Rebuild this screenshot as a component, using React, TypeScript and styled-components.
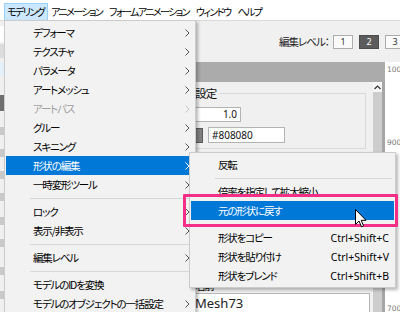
import React from "react";
import styled, { createGlobalStyle, css } from "styled-components";

const GlobalStyle = createGlobalStyle`
  html, body { margin: 0; padding: 0; background: #f0f0f0; }
  body {
    font-family: "Noto Sans CJK JP", "Noto Sans", sans-serif;
    font-feature-settings: "palt" 1;
    color: #000;
  }
  * { box-sizing: border-box; }
`;

// kana in the reference are narrow (Yu Gothic UI) – tighten Noto a bit
const jp = css`
  font-family: "Noto Sans CJK JP", sans-serif;
  font-feature-settings: "palt" 1;
  font-size: 10.5px;
  letter-spacing: -1.15px;
`;

const Screen = styled.div`
  position: relative;
  width: 400px;
  height: 312px;
  overflow: hidden;
  background: #f0f0f0;
  display: flex;
  flex-direction: column;
`;

/* ---------- menu bar ---------- */

const MenuBar = styled.div`
  height: 21px;
  flex: none;
  background: #fff;
  border-bottom: 1px solid #dadada;
  display: flex;
  align-items: flex-end;
  padding-left: 4px;
  ${jp}
  font-size: 10px;
  letter-spacing: -1.6px;
`;

const MenuBarItem = styled.div<{ $open?: boolean }>`
  height: 17px;
  line-height: 15px;
  padding: 0 3px 0 2px;
  border: 1px solid transparent;
  border-bottom: none;
  white-space: nowrap;
  ${(p) =>
    p.$open &&
    css`
      background: #cce8ff;
      border-color: #99d1ff;
    `}
`;

/* ---------- toolbar ---------- */

const Toolbar = styled.div`
  height: 41px;
  flex: none;
  display: flex;
  align-items: center;
  gap: 6px;
  margin-right: -5px;
`;

const ToolStub = styled.div`
  margin-right: auto;
  width: 4px;
  display: flex;
  flex-direction: column;
  gap: 2px;
`;

const StubBlock = styled.div<{ $h: number; $bg: string; $gap?: number }>`
  height: ${(p) => p.$h}px;
  margin-top: ${(p) => p.$gap ?? 0}px;
  background: ${(p) => p.$bg};
`;

const LevelLabel = styled.span`
  ${jp}
  letter-spacing: -1px;
  margin-right: -2px;
  color: #222;
`;

const LevelButton = styled.div<{ $selected?: boolean }>`
  width: 20px;
  height: 14px;
  border: 1px solid #adadad;
  background: #fafafa;
  color: #333;
  font-family: "Noto Sans", sans-serif;
  font-size: 9px;
  line-height: 12px;
  text-align: center;
  ${(p) =>
    p.$selected &&
    css`
      background: #5c5c5c;
      border-color: #4c4c4c;
      color: #fff;
    `}
`;

/* ---------- workspace ---------- */

const Workspace = styled.div`
  flex: 1;
  display: flex;
  min-height: 0;
`;

const LeftArea = styled.div`
  width: 186px;
  flex: none;
  display: flex;
  flex-direction: column;
  gap: 6px;
`;

const Panel = styled.div`
  flex: 1;
  display: flex;
  flex-direction: column;
  min-width: 0;
`;

const PanelBand = styled.div`
  height: 20px;
  flex: none;
  background: #ababab;
`;

const PanelBody = styled.div`
  flex: 1;
  display: flex;
  min-height: 0;
`;

const Content = styled.div`
  flex: 1;
  display: flex;
  flex-direction: column;
  padding: 0 7px;
  min-width: 0;
`;

const GroupBox = styled.fieldset`
  margin: 4px 0 0;
  padding: 7px 0 5px 1px;
  border: 1px solid #d9d9d9;
  min-width: 0;
`;

const GroupTitle = styled.legend`
  ${jp}
  font-size: 11.5px;
  letter-spacing: -0.8px;
  padding: 0 3px 0 0;
  line-height: 14px;
  color: #111;
`;

const FieldRow = styled.div<{ $gap?: number }>`
  display: flex;
  align-items: center;
  gap: 5px;
  margin-top: ${(p) => p.$gap ?? 0}px;
`;

const Field = styled.div<{ $w: number; $h: number; $right?: boolean }>`
  width: ${(p) => p.$w}px;
  height: ${(p) => p.$h}px;
  background: #fff;
  border: 1px solid #b4b4b4;
  font-family: "Noto Sans", sans-serif;
  font-size: 10px;
  line-height: ${(p) => p.$h - 2}px;
  padding: 0 3px;
  text-align: ${(p) => (p.$right ? "right" : "left")};
  color: #111;
`;

const Swatch = styled.div`
  width: 8px;
  height: 15px;
  background: #808080;
  border: 1px solid #5a5a5a;
`;

const NameLabel = styled.div`
  ${jp}
  margin-top: auto;
  line-height: 14px;
  padding-left: 2px;
`;

const NameField = styled.div`
  height: 19px;
  margin-right: -4px;
  background: #fff;
  border: 1px solid #b4b4b4;
  border-bottom: none;
  font-family: "Noto Sans", sans-serif;
  font-size: 13px;
  line-height: 18px;
  padding-left: 1px;
  color: #222;
`;

const ScrollBar = styled.div`
  width: 9px;
  flex: none;
  display: flex;
  flex-direction: column;
`;

const ScrollArrow = styled.div`
  height: 10px;
  background: #f7f7f7;
  display: flex;
  align-items: center;
  justify-content: center;
`;

const ScrollThumb = styled.div`
  flex: 1;
  background: #cdcdcd;
`;

const Divider = styled.div`
  width: 3px;
  flex: none;
  background: #a6a6a6;
`;

const Ruler = styled.div`
  width: 15px;
  flex: none;
  background: #fff;
  display: flex;
  flex-direction: column;
  padding-left: 2px;
  font-family: "DejaVu Sans", sans-serif;
  font-size: 7.5px;
  color: #777;
`;

const RulerMark = styled.div<{ $gap: number }>`
  margin-top: ${(p) => p.$gap}px;
  line-height: 10px;
  white-space: nowrap;
`;

/* ---------- context menus ---------- */

const MenuPanel = styled.div<{ $x: number; $y: number; $w: number }>`
  position: absolute;
  left: ${(p) => p.$x}px;
  top: ${(p) => p.$y}px;
  width: ${(p) => p.$w}px;
  background: #f2f2f2;
  border: 1px solid #cccccc;
  padding: 2px 1px;
  box-shadow: 2px 2px 3px rgba(0, 0, 0, 0.28);
`;

const MenuRow = styled.div<{ $active?: boolean; $disabled?: boolean; $end: number }>`
  height: 19px;
  display: grid;
  grid-template-columns: 27px 1fr auto;
  align-items: center;
  padding-right: ${(p) => p.$end}px;
  white-space: nowrap;
  color: ${(p) => (p.$disabled ? "#a0a0a0" : "#000")};
  ${(p) =>
    p.$active &&
    css`
      background: #0078d7;
      color: #fff;
    `}
`;

const RowLabel = styled.span`
  ${jp}
  grid-column: 2;
`;

const Shortcut = styled.span`
  grid-column: 3;
  font-family: "Noto Sans", sans-serif;
  font-size: 10.5px;
  letter-spacing: 0;
`;

const ChevronCell = styled.span<{ $tone: string }>`
  grid-column: 3;
  display: flex;
  color: ${(p) => p.$tone};
`;

const Separator = styled.div<{ $indent: number }>`
  height: 8px;
  display: flex;
  align-items: center;
  padding: 0 2px 0 ${(p) => p.$indent}px;
  &::after {
    content: "";
    flex: 1;
    height: 1px;
    background: #d7d7d7;
  }
`;

const Callout = styled.div`
  position: absolute;
  left: 183px;
  top: 194px;
  width: 215px;
  height: 33px;
  border: 3px solid #f52f88;
  border-radius: 1px;
`;

const Pointer = styled.svg`
  position: absolute;
  left: 355px;
  top: 209px;
`;

type Item =
  | { sep: true }
  | { label: string; sub?: boolean; disabled?: boolean; active?: boolean; key?: string };

const mainItems: Item[] = [
  { label: "デフォーマ", sub: true },
  { label: "テクスチャ", sub: true },
  { label: "パラメータ", sub: true },
  { label: "アートメッシュ", sub: true },
  { label: "アートパス", sub: true, disabled: true },
  { label: "グルー", sub: true },
  { label: "スキニング", sub: true },
  { label: "形状の編集", sub: true, active: true },
  { label: "一時変形ツール", sub: true },
  { sep: true },
  { label: "ロック", sub: true },
  { label: "表示/非表示", sub: true },
  { sep: true },
  { label: "編集レベル", sub: true },
  { sep: true },
  { label: "モデルのIDを変換" },
  { label: "モデルのオブジェクトの一括設定", sub: true },
];

const subItems: Item[] = [
  { label: "反転" },
  { sep: true },
  { label: "倍率を指定して拡大縮小" },
  { label: "元の形状に戻す", active: true },
  { sep: true },
  { label: "形状をコピー", key: "Ctrl+Shift+C" },
  { label: "形状を貼り付け", key: "Ctrl+Shift+V" },
  { label: "形状をブレンド", key: "Ctrl+Shift+B" },
];

function Chevron() {
  return (
    <svg width="8" height="8" viewBox="0 0 8 8">
      <polyline points="2.5,0.5 6,4 2.5,7.5" fill="none" stroke="currentColor" strokeWidth="1" />
    </svg>
  );
}

function MenuList({ items, end }: { items: Item[]; end: number }) {
  return (
    <>
      {items.map((it, i) => {
        if ("sep" in it) return <Separator key={i} $indent={24} />;
        const tone = it.active ? "#fff" : it.disabled ? "#c4c4c4" : "#555";
        return (
          <MenuRow key={i} $active={it.active} $disabled={it.disabled} $end={end}>
            <RowLabel>{it.label}</RowLabel>
            {it.sub && (
              <ChevronCell $tone={tone}>
                <Chevron />
              </ChevronCell>
            )}
            {it.key && <Shortcut>{it.key}</Shortcut>}
          </MenuRow>
        );
      })}
    </>
  );
}

const topMenus = ["モデリング", "アニメーション", "フォームアニメーション", "ウィンドウ", "ヘルプ"];

export default function App() {
  return (
    <>
      <GlobalStyle />
      <Screen>
        <MenuBar>
          {topMenus.map((m, i) => (
            <MenuBarItem key={m} $open={i === 0}>
              {m}
            </MenuBarItem>
          ))}
        </MenuBar>

        <Toolbar>
          <ToolStub>
            <StubBlock $h={16} $bg="#ffffff" />
            <StubBlock $h={14} $bg="#dcdcdc" />
          </ToolStub>
          <LevelLabel>編集レベル：</LevelLabel>
          <LevelButton>1</LevelButton>
          <LevelButton $selected>2</LevelButton>
          <LevelButton>3</LevelButton>
        </Toolbar>

        <Workspace>
          <LeftArea>
            <StubBlock $h={13} $bg="#e4f1fb" />
            <StubBlock $h={16} $bg="#6f6f6f" $gap={14} />
            <StubBlock $h={8} $bg="#c9c9c9" $gap={10} />
            <StubBlock $h={8} $bg="#c9c9c9" $gap={8} />
            <StubBlock $h={8} $bg="#c9c9c9" $gap={8} />
            <StubBlock $h={8} $bg="#c9c9c9" $gap={8} />
            <StubBlock $h={8} $bg="#c9c9c9" $gap={10} />
            <StubBlock $h={8} $bg="#c9c9c9" $gap={8} />
            <StubBlock $h={8} $bg="#c9c9c9" $gap={14} />
            <StubBlock $h={8} $bg="#c9c9c9" $gap={10} />
          </LeftArea>

          <Panel>
            <PanelBand />
            <PanelBody>
              <Content>
                <GroupBox>
                  <GroupTitle>設定</GroupTitle>
                  <FieldRow>
                    <Field $w={46} $h={15} $right>
                      1.0
                    </Field>
                  </FieldRow>
                  <FieldRow $gap={5}>
                    <Swatch />
                    <Field $w={77} $h={16}>
                      #808080
                    </Field>
                  </FieldRow>
                </GroupBox>
                <NameLabel>名前</NameLabel>
                <NameField>Mesh73</NameField>
              </Content>
              <ScrollBar>
                <ScrollArrow>
                  <svg width="7" height="5" viewBox="0 0 7 5">
                    <polyline points="0.5,4 3.5,1 6.5,4" fill="none" stroke="#333" strokeWidth="1.2" />
                  </svg>
                </ScrollArrow>
                <ScrollThumb />
              </ScrollBar>
              <Divider />
            </PanelBody>
          </Panel>

          <Ruler>
            <RulerMark $gap={3}>100</RulerMark>
            <RulerMark $gap={63}>900</RulerMark>
            <RulerMark $gap={156}>700</RulerMark>
          </Ruler>
        </Workspace>

        <MenuPanel $x={4} $y={20} $w={192}>
          <MenuList items={mainItems} end={3} />
        </MenuPanel>

        <MenuPanel $x={189} $y={152} $w={207}>
          <MenuList items={subItems} end={5} />
        </MenuPanel>

        <Callout />

        <Pointer width="12" height="19" viewBox="0 0 12 19">
          <path
            d="M0.5 0.5 L0.5 15.5 L4 12 L6.5 17.8 L8.6 16.9 L6.2 11.3 L11 11.3 Z"
            fill="#fff"
            stroke="#000"
            strokeWidth="1"
            strokeLinejoin="round"
          />
        </Pointer>
      </Screen>
    </>
  );
}
